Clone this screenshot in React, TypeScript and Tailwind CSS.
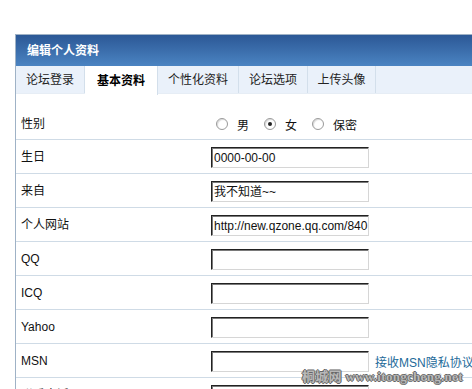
import React from 'react';

const tabs = [
  { name: '论坛登录', w: 'w-[69px]' },
  { name: '基本资料', w: 'w-[73px]' },
  { name: '个性化资料', w: 'w-[81px]' },
  { name: '论坛选项', w: 'w-[69px]' },
  { name: '上传头像', w: 'w-[68px]' },
];

const fields = [
  { label: '生日', value: '0000-00-00' },
  { label: '来自', value: '我不知道~~' },
  { label: '个人网站', value: 'http://new.qzone.qq.com/840' },
  { label: 'QQ', value: '' },
  { label: 'ICQ', value: '' },
  { label: 'Yahoo', value: '' },
  { label: 'MSN', value: '', extra: '接收MSN隐私协议' },
  { label: '联系电话', value: '' },
];

const font = { fontFamily: '"Liberation Sans", "Noto Sans CJK SC", sans-serif' };

const Radio: React.FC<{ checked?: boolean; label: string }> = ({ checked, label }) => (
  <span className="flex items-center">
    <span className="w-[12px] h-[12px] rounded-full border border-[#9a9a9a] bg-white flex items-center justify-center shadow-[inset_1px_1px_1px_rgba(0,0,0,0.15)]">
      {checked && <span className="w-[4px] h-[4px] rounded-full bg-[#222]" />}
    </span>
    <span className="ml-[9px] mt-[3px] text-[12px] text-[#111]">{label}</span>
  </span>
);

const App: React.FC = () => {
  return (
    <div className="w-[472px] h-[389px] overflow-hidden bg-white pt-[34px] pl-[15px] relative" style={font}>
      <div className="w-[480px] border-l border-t border-[#9fb2c6]">
        {/* Header */}
        <div className="h-[31px] flex items-center pl-[11px] bg-gradient-to-b from-[#2c5896] to-[#4b84c2]">
          <span className="text-white text-[12px] font-bold">编辑个人资料</span>
        </div>

        {/* Tabs */}
        <div className="h-[28px] flex bg-[#eaf1fa] border-b border-[#e6edf5]">
          {tabs.map((t, i) => (
            <div
              key={t.name}
              className={
                i === 1
                  ? `${t.w} flex items-center justify-center bg-white font-bold text-[12px] text-black border-r border-[#d3dfeb] h-[29px]`
                  : `${t.w} flex items-center justify-center text-[12px] text-[#222] border-r border-[#d3dfeb]`
              }
            >
              {t.name}
            </div>
          ))}
        </div>

        {/* Form */}
        <div className="pt-[12px]">
          <div className="h-[34px] flex items-center border-b border-[#cfdbe6] pt-[3px]">
            <span className="w-[195px] pl-[5px] text-[12px] text-[#111]">性别</span>
            <div className="flex items-center gap-[15px] pl-[5px]">
              <Radio label="男" />
              <Radio label="女" checked />
              <Radio label="保密" />
            </div>
          </div>
          {fields.map((f) => (
            <div key={f.label} className="h-[34px] flex items-center border-b border-[#cfdbe6]">
              <span className="w-[195px] pl-[5px] text-[12px] text-[#111]">{f.label}</span>
              <div className="w-[158px] h-[21px] mt-[2px] border-t border-l border-[#222] border-b border-r border-b-[#d6d6d6] border-r-[#d6d6d6] shadow-[inset_1px_1px_0_#7a7a7a] bg-white flex items-center pl-[2px] overflow-hidden whitespace-nowrap text-[12px] text-[#111]">
                {f.value}
              </div>
              {f.extra && (
                <span className="ml-[6px] mt-[4px] text-[12px] text-[#1d6a99] whitespace-nowrap">{f.extra}</span>
              )}
            </div>
          ))}
        </div>
      </div>

      {/* Watermark */}
      <div
        className="absolute left-[302px] top-[367px] text-[13px] font-bold text-[#b8b8b8] tracking-[0.3px] whitespace-nowrap"
        style={{ textShadow: '1px 0 #666, -1px 0 #666, 0 1px #666, 0 -1px #666', fontFamily: '"Liberation Serif", "Noto Sans CJK SC", serif' }}
      >
        桐城网 www.itongcheng.net
      </div>
    </div>
  );
};

export default App;
